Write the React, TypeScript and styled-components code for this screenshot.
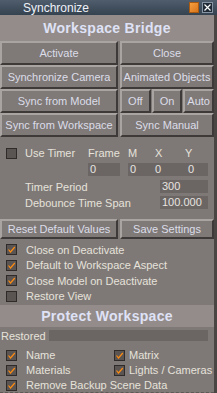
import styled, { createGlobalStyle } from "styled-components";

const GlobalStyle = createGlobalStyle`
  html, body {
    margin: 0;
    padding: 0;
    background: #7e7977;
  }
  body {
    font-family: "Liberation Sans", Arial, sans-serif;
    font-size: 11px;
  }
`;

const Window = styled.div`
  width: 217px;
  height: 393px;
  display: flex;
  flex-direction: column;
  background: #7e7977;
  overflow: hidden;
`;

const TitleBar = styled.div`
  height: 15px;
  flex: none;
  display: flex;
  align-items: center;
  padding-left: 23px;
  padding-right: 4px;
  background: linear-gradient(#4f5d6d, #35424f);
  color: #eef1f8;
  font-size: 12px;
`;

const TitleText = styled.span`
  flex: 1;
`;

const OrangeBox = styled.div`
  width: 10px;
  height: 11px;
  background: linear-gradient(135deg, #f5a040, #d9741a);
  border: 1px solid #a85a10;
  box-sizing: border-box;
  margin-right: 3px;
`;

const CloseBox = styled.div`
  width: 11px;
  height: 11px;
  background: #1f2a36;
  border: 1px solid #8694a4;
  box-sizing: border-box;
  display: flex;
  align-items: center;
  justify-content: center;
`;

const Body = styled.div`
  flex: 1;
  display: flex;
  min-height: 0;
`;

const Panel = styled.div`
  width: 214px;
  display: flex;
  flex-direction: column;
  border-bottom: 1px dashed #5e5957;
`;

const Strip = styled.div`
  width: 3px;
  background: #4a4644;
`;

const Band = styled.div<{ $h: number }>`
  height: ${(p) => p.$h}px;
  display: flex;
  align-items: center;
  justify-content: center;
  background: #948c8a;
  color: #dfe2f6;
  font-weight: bold;
  font-size: 14px;
  letter-spacing: 0.3px;
`;

const ButtonRow = styled.div<{ $h: number; $cols: string; $top?: number }>`
  display: grid;
  grid-template-columns: ${(p) => p.$cols};
  column-gap: 2px;
  height: ${(p) => p.$h}px;
  margin-top: ${(p) => p.$top ?? 0}px;
`;

const Button = styled.div`
  display: flex;
  align-items: center;
  justify-content: center;
  box-sizing: border-box;
  background: #7f7977;
  border: 2px solid;
  border-color: #a9a3a1 #3e3a39 #3e3a39 #a9a3a1;
  color: #dcdde9;
  font-size: 11px;
  white-space: nowrap;
  overflow: hidden;
`;

const Split = styled.div`
  display: grid;
  grid-template-columns: 1fr 1fr 1fr;
  column-gap: 1px;
`;

const TimerGrid = styled.div`
  display: grid;
  grid-template-columns: 19px 63px 40px 27px 30px 23px;
  grid-template-rows: 14px 13px;
  row-gap: 3px;
  padding: 9px 0 0 6px;
  align-items: center;
  color: #e6e2da;
`;

const MxyBox = styled.div`
  grid-column: 4 / 7;
  display: grid;
  grid-template-columns: 25px 33px 1fr;
  height: 13px;
  padding-left: 2px;
  background: #6b6664;
  color: #e8e4e0;
  line-height: 13px;
`;

const Field = styled.div<{ $w: number }>`
  width: ${(p) => p.$w}px;
  height: 13px;
  background: #6b6664;
  color: #e8e4e0;
  line-height: 13px;
  padding-left: 2px;
  box-sizing: border-box;
`;

const FieldRow = styled.div<{ $top: number }>`
  display: flex;
  align-items: center;
  justify-content: space-between;
  margin-top: ${(p) => p.$top}px;
  padding: 0 6px 0 25px;
  color: #e6e2da;
  height: 13px;
`;

const Box = styled.div`
  width: 11px;
  height: 11px;
  flex: none;
  box-sizing: border-box;
  border: 1px solid #2e2b2a;
  background: #5a5553;
  display: flex;
  align-items: center;
  justify-content: center;
`;

const CheckList = styled.div`
  display: flex;
  flex-direction: column;
  gap: 4.5px;
  padding: 5px 0 0 6px;
`;

const CheckItem = styled.div<{ $gap: number }>`
  display: flex;
  align-items: center;
  gap: ${(p) => p.$gap}px;
  height: 11px;
  color: #e6e2da;
  white-space: nowrap;
`;

const CheckGrid = styled.div`
  display: grid;
  grid-template-columns: 108px 1fr;
  row-gap: 4px;
  padding: 8px 0 0 6px;
`;

const Wide = styled.div`
  grid-column: 1 / 3;
`;

const RestoredRow = styled.div`
  display: flex;
  align-items: center;
  gap: 3px;
  margin-top: 3px;
  padding: 0 6px 0 1px;
  color: #e6e2da;
  height: 12px;
`;

const RestoredBar = styled.div`
  flex: 1;
  height: 11px;
  background: #6b6664;
`;

const Spacer = styled.div<{ $h: number }>`
  height: ${(p) => p.$h}px;
  flex: none;
`;

function Check({ on }: { on?: boolean }) {
  return (
    <Box>
      {on && (
        <svg width="9" height="9" viewBox="0 0 9 9">
          <path d="M1.5 4.5 L3.5 7 L7.8 2" fill="none" stroke="#ff8c10" strokeWidth="1.2" />
        </svg>
      )}
    </Box>
  );
}

function CheckLine({ on, label, gap = 9 }: { on?: boolean; label: string; gap?: number }) {
  return (
    <CheckItem $gap={gap}>
      <Check on={on} />
      <span>{label}</span>
    </CheckItem>
  );
}

export default function App() {
  return (
    <Window>
      <GlobalStyle />
      <TitleBar>
        <TitleText>Synchronize</TitleText>
        <OrangeBox />
        <CloseBox>
          <svg width="7" height="7" viewBox="0 0 7 7">
            <path d="M0.5 0.5 L6.5 6.5 M6.5 0.5 L0.5 6.5" stroke="#ffffff" strokeWidth="1.2" />
          </svg>
        </CloseBox>
      </TitleBar>
      <Body>
        <Panel>
          <Band $h={26}>Workspace Bridge</Band>
          <ButtonRow $h={24} $cols="118px 1fr">
            <Button>Activate</Button>
            <Button>Close</Button>
          </ButtonRow>
          <ButtonRow $h={24} $cols="118px 1fr">
            <Button>Synchronize Camera</Button>
            <Button>Animated Objects</Button>
          </ButtonRow>
          <ButtonRow $h={24} $cols="118px 1fr">
            <Button>Sync from Model</Button>
            <Split>
              <Button>Off</Button>
              <Button>On</Button>
              <Button>Auto</Button>
            </Split>
          </ButtonRow>
          <ButtonRow $h={24} $cols="118px 1fr">
            <Button>Sync from Workspace</Button>
            <Button>Sync Manual</Button>
          </ButtonRow>

          <TimerGrid>
            <Check />
            <span>Use Timer</span>
            <span>Frame</span>
            <span>M</span>
            <span>X</span>
            <span>Y</span>
            <span />
            <span />
            <Field $w={32}>0</Field>
            <MxyBox>
              <span>0</span>
              <span>0</span>
              <span>0</span>
            </MxyBox>
          </TimerGrid>
          <FieldRow $top={4}>
            <span>Timer Period</span>
            <Field $w={48}>300</Field>
          </FieldRow>
          <FieldRow $top={3}>
            <span>Debounce Time Span</span>
            <Field $w={48}>100.000</Field>
          </FieldRow>

          <ButtonRow $h={20} $cols="118px 1fr" $top={10}>
            <Button>Reset Default Values</Button>
            <Button>Save Settings</Button>
          </ButtonRow>
          <CheckList>
            <CheckLine on label="Close on Deactivate" />
            <CheckLine on label="Default to Workspace Aspect" />
            <CheckLine on label="Close Model on Deactivate" />
            <CheckLine label="Restore View" />
          </CheckList>

          <Spacer $h={3} />
          <Band $h={22}>Protect Workspace</Band>
          <RestoredRow>
            <span>Restored</span>
            <RestoredBar />
          </RestoredRow>
          <CheckGrid>
            <CheckLine on label="Name" />
            <CheckLine on label="Matrix" gap={4} />
            <CheckLine on label="Materials" />
            <CheckLine on label="Lights / Cameras" gap={4} />
            <Wide>
              <CheckLine on label="Remove Backup Scene Data" />
            </Wide>
          </CheckGrid>
        </Panel>
        <Strip />
      </Body>
    </Window>
  );
}
